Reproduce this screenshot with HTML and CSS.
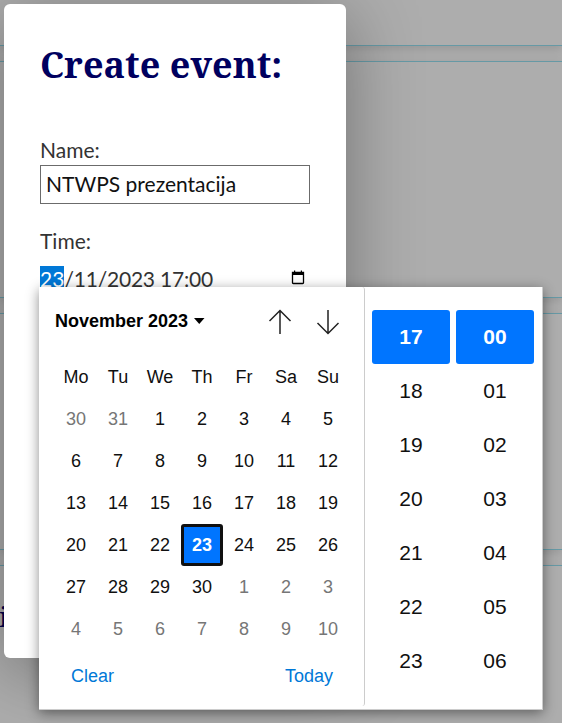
FILE: index.html
```
<!DOCTYPE html>
<html lang="en">
<head>
<meta charset="utf-8">
<title>Create event</title>
<link rel="stylesheet" href="styles.css">
</head>
<body>
<main class="feed">
  <section class="card card-first"></section>
  <section class="card"></section>
  <section class="card"></section>
  <section class="card card-last"><h2 class="card-title">i</h2></section>
</main>
<form class="modal">
  <h1 class="title">Create event:</h1>
  <label class="label" for="name">Name:</label>
  <input class="name" id="name" type="text" value="NTWPS prezentacija">
  <div class="label time-label">Time:</div>
  <div class="datetime">
    <span><span class="selected">23</span>/11/2023 17:00</span>
    <svg class="cal-icon" width="14" height="15" viewBox="0 0 14 15"><path d="M1.500 2.500h11v10.200a.8.8 0 0 1-.8.8H2.300a.8.8 0 0 1-.8-.8z" fill="none" stroke="#000" stroke-width="1.300"/><path d="M1 2h12v3H1zM3 .5h1.200V2H3zM9.800 .5H11V2H9.800z"/></svg>
  </div>
</form>
<div class="picker">
  <div class="date-pane">
    <div class="month-bar">
      <span class="month">November 2023</span>
      <svg class="caret" width="11" height="6" viewBox="0 0 11 6"><path d="M0 0h10.500L5.250 6z"/></svg>
      <svg class="arrow arrow-up" width="24" height="26" viewBox="0 0 24 26"><path d="M12 25V1.500M1.500 12L12 1.500 22.500 12"/></svg>
      <svg class="arrow" width="24" height="26" viewBox="0 0 24 26"><path d="M12 1v23.500M1.500 14L12 24.500 22.500 14"/></svg>
    </div>
    <div class="days">
      <span>Mo</span><span>Tu</span><span>We</span><span>Th</span><span>Fr</span><span>Sa</span><span>Su</span>
      <span class="other">30</span><span class="other">31</span><span>1</span><span>2</span><span>3</span><span>4</span><span>5</span>
      <span>6</span><span>7</span><span>8</span><span>9</span><span>10</span><span>11</span><span>12</span>
      <span>13</span><span>14</span><span>15</span><span>16</span><span>17</span><span>18</span><span>19</span>
      <span>20</span><span>21</span><span>22</span><span class="current">23</span><span>24</span><span>25</span><span>26</span>
      <span>27</span><span>28</span><span>29</span><span>30</span><span class="other">1</span><span class="other">2</span><span class="other">3</span>
      <span class="other">4</span><span class="other">5</span><span class="other">6</span><span class="other">7</span><span class="other">8</span><span class="other">9</span><span class="other">10</span>
    </div>
    <div class="actions"><span>Clear</span><span>Today</span></div>
  </div>
  <div class="time-pane">
    <div class="column"><span class="active">17</span><span>18</span><span>19</span><span>20</span><span>21</span><span>22</span><span>23</span></div>
    <div class="column"><span class="active">00</span><span>01</span><span>02</span><span>03</span><span>04</span><span>05</span><span>06</span></div>
  </div>
</div>
</body>
</html>
```
FILE: styles.css
```
* { box-sizing: border-box; }
body {
  margin: 0;
  height: 723px;
  overflow: hidden;
  position: relative;
  background: #adadad;
}
.feed {
  display: flex;
  flex-direction: column;
  gap: 15px;
  height: 723px;
  overflow: hidden;
}
.card {
  flex: none;
  height: 237px;
  border: solid #6699a5;
  border-width: 1px 0;
  background: #adadad;
  box-shadow: 0 3px 10px rgba(0, 0, 0, .13);
}
.card-first { height: 46px; border-top: 0; }
.card-title {
  margin: 34px 0 0 -1px;
  font: 27px/34px "Noto Serif", "DejaVu Serif", serif;
  color: #00004c;
}
.modal {
  position: absolute;
  left: 4px;
  top: 4px;
  width: 342px;
  height: 654px;
  padding: 36px;
  border-radius: 6px;
  background: #fff;
  box-shadow: 0 12px 72px rgba(0, 0, 0, .35);
  font: 21px/30px Lato, sans-serif;
  color: #333;
}
.title {
  margin: 0 0 46px;
  font: bold 36px/49px "Noto Serif", "DejaVu Serif", serif;
  color: #00005f;
  white-space: nowrap;
}
.label { display: block; }
.name {
  display: block;
  width: 270px;
  height: 39px;
  padding: 0 5px 2px;
  border: 1px solid #6b6b6b;
  border-radius: 0;
  background: #fff;
  font: 21px Lato, sans-serif;
  color: #111;
  outline: 0;
}
.time-label { margin-top: 22px; }
.datetime {
  display: flex;
  justify-content: space-between;
  margin-top: 11px;
  padding-right: 5px;
  line-height: 24px;
  letter-spacing: -.2px;
}
.selected { background: #0078d7; color: #fff; letter-spacing: 0; }
.cal-icon { margin-top: 3px; }
.picker {
  position: absolute;
  left: 39px;
  top: 287px;
  width: 504px;
  height: 423px;
  display: flex;
  border: solid #ccc;
  border-width: 0 1px 1px 0;
  background: #fff;
  box-shadow: 0 3px 12px rgba(0, 0, 0, .45);
  font: 18px "Liberation Sans", sans-serif;
  color: #101010;
}
.date-pane {
  width: 326px;
  height: 419px;
  padding: 16px 16px 0;
  border-right: 1px solid #ccc;
  border-radius: 0 3px 3px 0;
}
.month-bar { display: flex; align-items: center; height: 38px; padding-right: 8px; }
.month { font-weight: bold; color: #000; margin-top: -2px; }
.caret { margin: -3px 0 0 6px; }
.arrow {
  margin-left: 24px;
  fill: none;
  stroke: #222;
  stroke-width: 1.500;
}
.arrow-up { margin-left: auto; }
.days {
  display: grid;
  grid-template-columns: repeat(7, 42px);
  grid-auto-rows: 42px;
  margin-top: 15px;
}
.days span { display: flex; align-items: center; justify-content: center; }
.days .other { color: #767676; }
.days .current {
  border: 3px solid #101010;
  border-radius: 3px;
  background: #0075ff;
  color: #fff;
  font-weight: bold;
}
.actions {
  display: flex;
  justify-content: space-between;
  margin-top: 16px;
  padding: 0 15px 0 16px;
  color: #0078d7;
}
.time-pane { display: flex; gap: 6px; padding: 23px 0 0 7px; font-size: 21px; }
.column { width: 78px; }
.column span {
  display: flex;
  align-items: center;
  justify-content: center;
  height: 54px;
}
.column .active {
  border-radius: 3px;
  background: #0075ff;
  color: #fff;
  font-weight: bold;
}
```
